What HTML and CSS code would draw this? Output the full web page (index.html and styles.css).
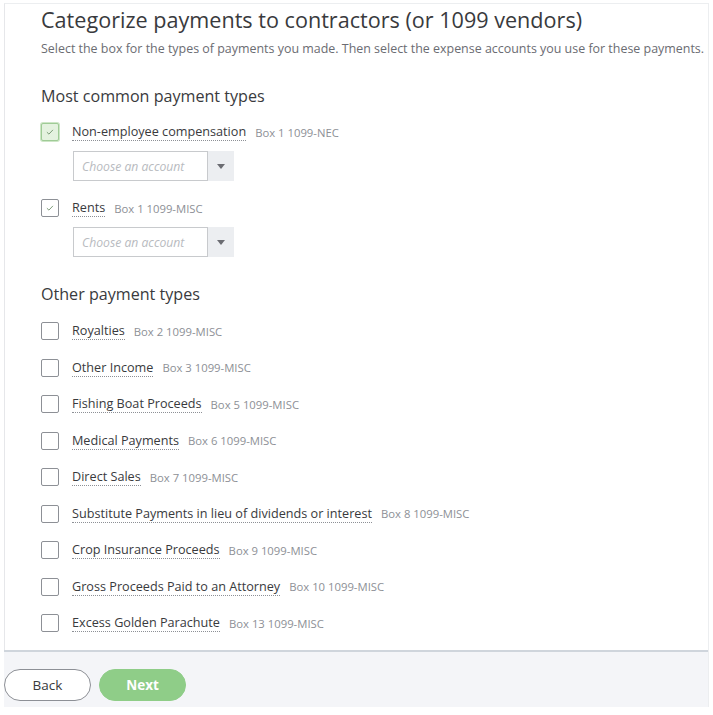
FILE: index.html
```html
<!DOCTYPE html>
<html lang="en">
<head>
<meta charset="utf-8">
<title>Categorize payments to contractors</title>
<link rel="stylesheet" href="styles.css">
</head>
<body>
<div class="frame">
  <main class="content">
    <h1 class="title">Categorize payments to contractors (or 1099 vendors)</h1>
    <p class="intro">Select the box for the types of payments you made. Then select the expense accounts you use for these payments. <a class="link" href="#">Learn more</a></p>

    <h2 class="section">Most common payment types</h2>
    <ul class="types common">
      <li class="item">
        <div class="row">
          <span class="box box-focus"><svg viewBox="0 0 18 18" width="18" height="18"><path d="M5.5 9.2 L7.8 11.4 L12.3 6.6" fill="none" stroke="#7a9a76" stroke-width="1.1"/></svg></span>
          <span class="name">Non-employee compensation</span>
          <span class="boxno">Box 1 1099-NEC</span>
        </div>
        <div class="select">
          <span class="field">Choose an account</span>
          <span class="arrow"><svg viewBox="0 0 8 5" width="8" height="5"><path d="M0 0 H8 L4 5 Z" fill="#6b6c72"/></svg></span>
        </div>
      </li>
      <li class="item">
        <div class="row">
          <span class="box"><svg viewBox="0 0 18 18" width="18" height="18"><path d="M5.5 9.2 L7.8 11.4 L12.3 6.6" fill="none" stroke="#7a9a76" stroke-width="1.1"/></svg></span>
          <span class="name">Rents</span>
          <span class="boxno">Box 1 1099-MISC</span>
        </div>
        <div class="select">
          <span class="field">Choose an account</span>
          <span class="arrow"><svg viewBox="0 0 8 5" width="8" height="5"><path d="M0 0 H8 L4 5 Z" fill="#6b6c72"/></svg></span>
        </div>
      </li>
    </ul>

    <h2 class="section section-other">Other payment types</h2>
    <ul class="types other">
      <li class="row"><span class="box"></span><span class="name">Royalties</span><span class="boxno">Box 2 1099-MISC</span></li>
      <li class="row"><span class="box"></span><span class="name">Other Income</span><span class="boxno">Box 3 1099-MISC</span></li>
      <li class="row"><span class="box"></span><span class="name">Fishing Boat Proceeds</span><span class="boxno">Box 5 1099-MISC</span></li>
      <li class="row"><span class="box"></span><span class="name">Medical Payments</span><span class="boxno">Box 6 1099-MISC</span></li>
      <li class="row"><span class="box"></span><span class="name">Direct Sales</span><span class="boxno">Box 7 1099-MISC</span></li>
      <li class="row"><span class="box"></span><span class="name">Substitute Payments in lieu of dividends or interest</span><span class="boxno">Box 8 1099-MISC</span></li>
      <li class="row"><span class="box"></span><span class="name">Crop Insurance Proceeds</span><span class="boxno">Box 9 1099-MISC</span></li>
      <li class="row"><span class="box"></span><span class="name">Gross Proceeds Paid to an Attorney</span><span class="boxno">Box 10 1099-MISC</span></li>
      <li class="row"><span class="box"></span><span class="name">Excess Golden Parachute</span><span class="boxno">Box 13 1099-MISC</span></li>
    </ul>
  </main>
  <footer class="footer">
    <button class="btn btn-back" type="button">Back</button>
    <button class="btn btn-next" type="button">Next</button>
  </footer>
</div>
</body>
</html>
```

FILE: styles.css
```css
html, body {
  margin: 0;
  padding: 0;
  background: #ffffff;
}
body {
  width: 713px;
  height: 715px;
  overflow: hidden;
  font-family: "Open Sans", "Liberation Sans", sans-serif;
  color: #393a3d;
}
.frame {
  margin: 3px 4px 0 4px;
  border-top: 1px solid #eceef0;
  border-left: 1px solid #e6e7ea;
  border-right: 1px solid #eceef0;
  display: flex;
  flex-direction: column;
}
.content {
  padding: 2px 0 0 36px;
  overflow: hidden;
  height: 646px;
  box-sizing: border-box;
}
.title {
  margin: 0;
  font-size: 21.6px;
  line-height: 28px;
  font-weight: 400;
  color: #393a3d;
  white-space: nowrap;
}
.intro {
  margin: 6px 0 0 0;
  font-size: 12.45px;
  line-height: 18px;
  color: #6b6c72;
  white-space: nowrap;
}
.link {
  color: #0077c5;
  text-decoration: none;
}
.section {
  margin: 26px 0 0 0;
  font-size: 16.1px;
  line-height: 24px;
  font-weight: 400;
  color: #393a3d;
}
.section-other {
  margin-top: 25px;
}
.types {
  list-style: none;
  margin: 0;
  padding: 0;
  display: flex;
  flex-direction: column;
}
.common {
  margin-top: 12px;
  gap: 15px;
}
.other {
  margin-top: 13px;
  gap: 12.5px;
}
.item {
  display: flex;
  flex-direction: column;
  gap: 7px;
}
.row {
  display: flex;
  align-items: center;
  height: 24px;
}
.box {
  width: 18px;
  height: 18px;
  box-sizing: border-box;
  border: 1px solid #8d9096;
  border-radius: 2px;
  background: #ffffff;
  margin-right: 13px;
  flex: none;
  display: flex;
  align-items: center;
  justify-content: center;
}
.box svg {
  display: block;
}
.box-focus {
  background: #e4f2df;
  border-color: #9fcb96;
  box-shadow: 0 0 0 1px #cde6c6;
}
.name {
  font-size: 12.65px;
  line-height: 17px;
  color: #393a3d;
  border-bottom: 1px dotted #8d9096;
}
.boxno {
  margin-left: 9px;
  font-size: 11.3px;
  color: #8d9096;
}
.select {
  margin-left: 32px;
  display: flex;
  width: 161px;
  height: 30px;
}
.field {
  flex: 1;
  border: 1px solid #c8cacd;
  border-right: none;
  box-sizing: border-box;
  padding-left: 8px;
  font-size: 12.2px;
  font-style: italic;
  color: #b8bbc0;
  display: flex;
  align-items: center;
  white-space: nowrap;
  overflow: hidden;
}
.arrow {
  width: 26px;
  flex: none;
  background: #eceef1;
  border-left: 1px solid #c8cacd;
  display: flex;
  align-items: center;
  justify-content: center;
}
.footer {
  border-top: 2px solid #cfd5dc;
  background: #f4f5f8;
  height: 57px;
  box-sizing: border-box;
  display: flex;
  align-items: flex-start;
  gap: 8px;
  padding-top: 17px;
  margin-left: -1px;
}
.btn {
  font-family: "Open Sans", "Liberation Sans", sans-serif;
  font-size: 13.5px;
  height: 32px;
  border-radius: 16px;
  padding: 0;
  cursor: pointer;
}
.btn-back {
  width: 87px;
  background: #ffffff;
  border: 1px solid #8d9096;
  color: #393a3d;
}
.btn-next {
  width: 87px;
  background: #8fcd88;
  border: 1px solid #8fcd88;
  color: #ffffff;
  font-weight: 700;
}
```
